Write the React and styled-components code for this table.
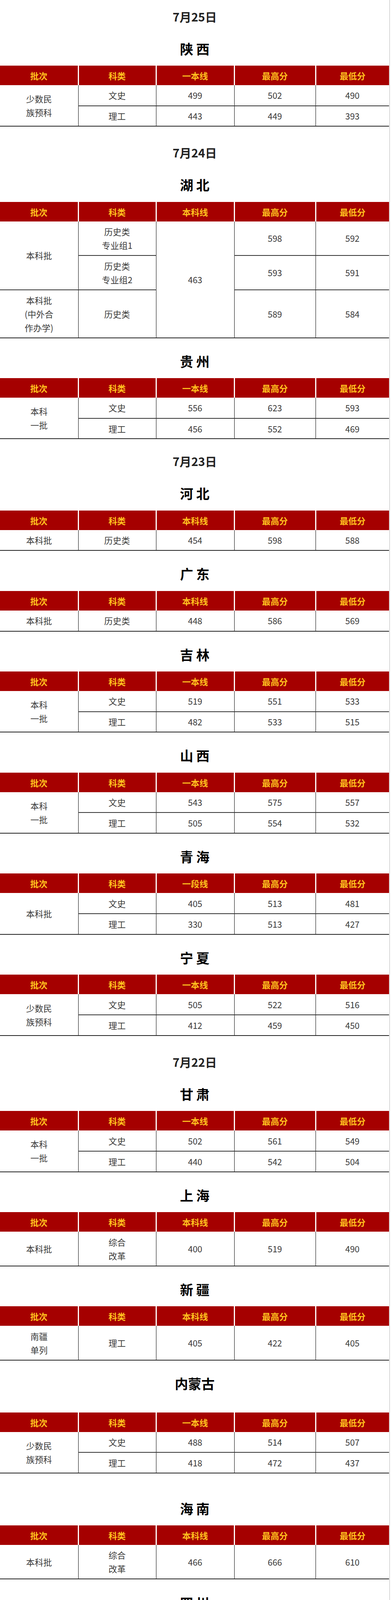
import React from 'react'
import styled, { createGlobalStyle } from 'styled-components'

const GlobalStyle = createGlobalStyle`
  html, body {
    margin: 0;
    padding: 0;
    background: #fff;
  }
  body {
    font-family: "Noto Sans CJK SC", "Noto Sans", sans-serif;
  }
`

const Page = styled.div`
  width: 996px;
  border-right: 1px solid #b4b4b4;
  padding-bottom: 7px;
  background: #fff;
`

const DateTitle = styled.h2`
  margin: 0;
  padding: ${p => (p.$first ? 21.5 : p.$tight ? 36 : 46)}px 0 4px;
  line-height: 40px;
  text-align: center;
  font-size: 30px;
  font-weight: 700;
  color: #222;
`

const Province = styled.h3`
  margin: 0;
  padding: ${p => 37 + (p.$above || 0)}px 0 ${p => 21.25 + (p.$below || 0)}px;
  line-height: 44px;
  text-align: center;
  font-size: 34px;
  font-weight: 700;
  color: #000;
`

const Table = styled.table`
  width: 995px;
  border-collapse: collapse;
  table-layout: fixed;
  border-bottom: 2px solid #222;
`

const HeadCell = styled.th`
  height: 50px;
  padding: 0;
  background: #a50000;
  color: #ffc21f;
  font-size: 22px;
  font-weight: 700;
  text-align: center;
  border-left: ${p => (p.$first ? 'none' : '3px solid #fff')};
`

const Row = styled.tr`
  height: ${p => p.$h}px;
`

const Cell = styled.td`
  padding: 0;
  text-align: center;
  vertical-align: middle;
  font-size: 22px;
  line-height: 35px;
  color: #3a3a3a;
  white-space: pre-line;
  border-left: ${p => (p.$lead && !p.$edge ? 'none' : '1px solid #000')};
  border-top: ${p => (p.$top ? '2px solid #333' : 'none')};
`

const widths = [200, 199, 200, 208, 188]

const twoRows = (batch, a, b) => [
  { cells: [{ t: batch, rs: 2 }, '文史', ...a] },
  { cells: [null, '理工', ...b] },
]

const sections = [
  { date: '7月25日', first: true },
  { name: '陕 西', line: '一本线', rows: twoRows('少数民\n族预科', ['499', '502', '490'], ['443', '449', '393']) },
  { date: '7月24日' },
  {
    name: '湖 北',
    line: '本科线',
    rows: [
      { h: 87, cells: [{ t: '本科批', rs: 2 }, '历史类\n专业组1', { t: '463', rs: 3 }, '598', '592'] },
      { h: 88, cells: [null, '历史类\n专业组2', null, '593', '591'] },
      { h: 123, cells: ['本科批\n(中外合\n作办学)', '历史类', null, '589', '584'] },
    ],
  },
  { name: '贵 州', line: '一本线', rows: twoRows('本科\n一批', ['556', '623', '593'], ['456', '552', '469']) },
  { date: '7月23日', tight: true },
  { name: '河 北', line: '本科线', rows: [{ cells: ['本科批', '历史类', '454', '598', '588'] }] },
  { name: '广 东', line: '本科线', rows: [{ cells: ['本科批', '历史类', '448', '586', '569'] }] },
  { name: '吉 林', line: '一本线', rows: twoRows('本科\n一批', ['519', '551', '533'], ['482', '533', '515']) },
  { name: '山 西', line: '一本线', rows: twoRows('本科\n一批', ['543', '575', '557'], ['505', '554', '532']) },
  { name: '青 海', line: '一段线', rows: twoRows('本科批', ['405', '513', '481'], ['330', '513', '427']) },
  { name: '宁 夏', line: '一本线', rows: twoRows('少数民\n族预科', ['505', '522', '516'], ['412', '459', '450']) },
  { date: '7月22日' },
  { name: '甘 肃', line: '一本线', rows: twoRows('本科\n一批', ['502', '561', '549'], ['440', '542', '504']) },
  { name: '上 海', line: '本科线', rows: [{ h: 88, cells: ['本科批', '综合\n改革', '400', '519', '490'] }] },
  { name: '新 疆', line: '本科线', rows: [{ h: 88, cells: ['南疆\n单列', '理工', '405', '422', '405'] }] },
  { name: '内蒙古', line: '一本线', below: 30, rows: twoRows('少数民\n族预科', ['488', '514', '507'], ['418', '472', '437']) },
  { name: '海 南', line: '本科线', above: 31, rows: [{ h: 87, cells: ['本科批', '综合\n改革', '466', '666', '610'] }] },
  { name: '四 川', line: '一本线', rows: twoRows('本科\n一批', ['541', '586', '576'], ['521', '618', '581']) },
  { name: '山 东', line: '一段线', rows: [{ h: 87, cells: ['本科批', '综合\n改革', '444', '592', '551'] }] },
  { name: '辽 宁', line: '本科线', rows: [{ h: 54, cells: ['本科批', '历史类', '456', '613', '587'] }] },
  { date: '7月20日' },
  { name: '黑龙江', line: '一本线', rows: twoRows('本科\n一批', ['472', '568', '547'], ['415', '561', '528']) },
  { name: '云 南', line: '一本线', rows: twoRows('本科\n一批', ['565', '620', '598'], ['520', '572', '532']) },
  {
    name: '安 徽',
    line: '一本线',
    rows: [
      ...twoRows('本科\n一批', ['560', '616', '582'], ['488', '581', '495']),
      { h: 107, cells: [{ t: '本科一批\n(中外合\n作办学)', edge: true }, '文史', '560', '591', '583'] },
    ],
  },
  {
    name: '陕 西',
    line: '一本线',
    rows: [
      ...twoRows('地方\n专项', ['499', '556', '530'], ['443', '524', '488']),
      { h: 78, cells: [{ t: '地方\n专项\n(征集\n志愿)', rs: 2 }, '文史', '499', '541', '530'] },
      { h: 80, cells: [null, '理工', '443', '478', '458'] },
    ],
  },
]

const ScoreTable = ({ line, rows }) => {
  const heads = ['批次', '科类', line, '最高分', '最低分']
  return (
    <Table>
      <colgroup>
        {widths.map((w, i) => (
          <col key={i} style={{ width: w }} />
        ))}
      </colgroup>
      <thead>
        <tr>
          {heads.map((h, i) => (
            <HeadCell key={i} $first={i === 0}>{h}</HeadCell>
          ))}
        </tr>
      </thead>
      <tbody>
        {rows.map((row, ri) => (
          <Row key={ri} $h={row.h || 52.8}>
            {row.cells.map((c, i) => {
              if (c === null) return null
              const cell = typeof c === 'string' ? { t: c } : c
              return (
                <Cell
                  key={i}
                  rowSpan={cell.rs}
                  $lead={i === 0}
                  $edge={cell.edge}
                  $top={ri > 0}
                >
                  {cell.t}
                </Cell>
              )
            })}
          </Row>
        ))}
      </tbody>
    </Table>
  )
}

const App = () => {
  return (
    <Page>
      <GlobalStyle />
      {sections.map((s, i) =>
        s.date ? (
          <DateTitle key={i} $first={s.first} $tight={s.tight}>{s.date}</DateTitle>
        ) : (
          <React.Fragment key={i}>
            <Province $above={s.above} $below={s.below}>{s.name}</Province>
            <ScoreTable line={s.line} rows={s.rows} />
          </React.Fragment>
        )
      )}
    </Page>
  )
}

export default App
